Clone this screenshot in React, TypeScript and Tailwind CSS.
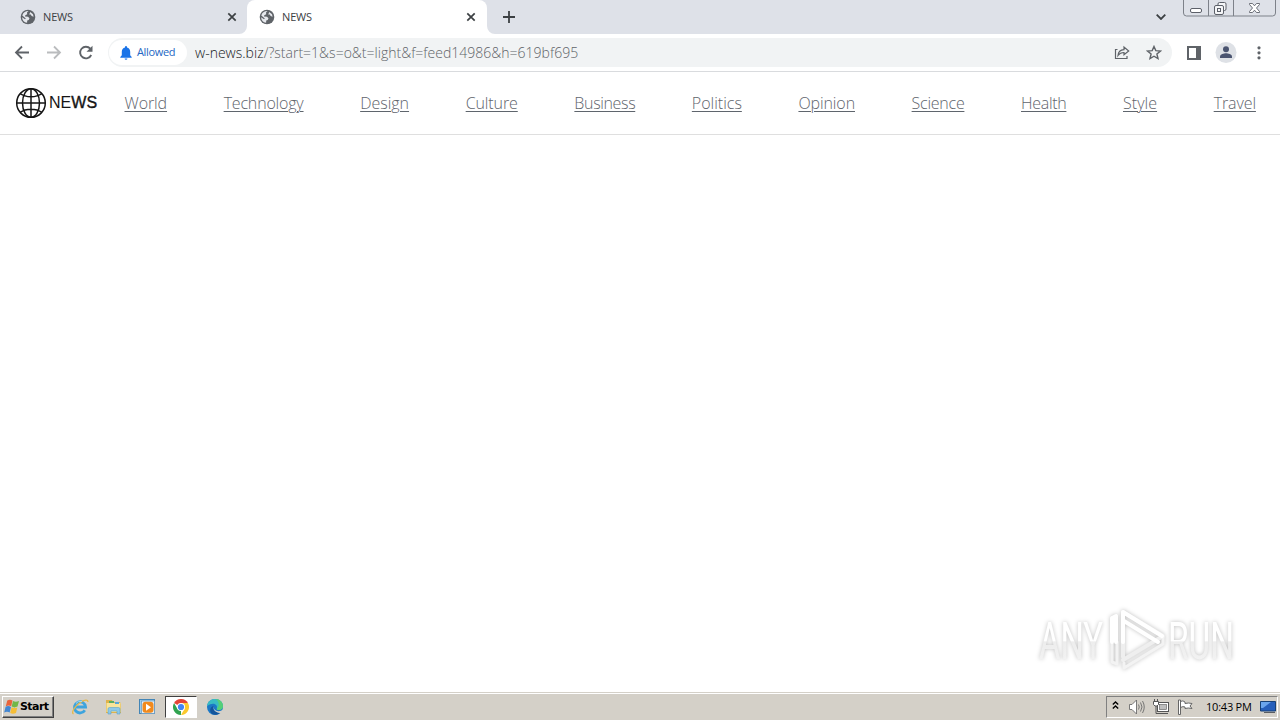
import React from 'react';

const navLinks = [
  { label: 'World', spacing: 'tracking-[-0.1px]' },
  { label: 'Technology', spacing: 'tracking-[-0.18px]' },
  { label: 'Design', spacing: 'tracking-normal' },
  { label: 'Culture', spacing: 'tracking-[-0.1px]' },
  { label: 'Business', spacing: 'tracking-[-0.35px]' },
  { label: 'Politics', spacing: 'tracking-normal' },
  { label: 'Opinion', spacing: 'tracking-[-0.1px]' },
  { label: 'Science', spacing: 'tracking-[-0.25px]' },
  { label: 'Health', spacing: 'tracking-[-0.3px]' },
  { label: 'Style', spacing: 'tracking-[0.05px]' },
  { label: 'Travel', spacing: 'tracking-[-0.1px]' },
];

const Favicon: React.FC = () => (
  <svg className="h-4 w-4 shrink-0" viewBox="0 0 16 16">
    <circle cx="8" cy="8" r="7.3" fill="#5f6368" />
    <path d="M8.5 2.1 L7 3.6 L7.2 5.3 L5.3 6.2 L5 7.6 L8 7.7 L9.5 9.2 L8.7 11 L7.2 11.4 L7.1 13.8 C4 13.4 2.1 11 2.1 8.2 L5 10.2 L5.8 9.4 L2.3 6.4 C3 3.8 5.5 2 8.5 2.1Z M10.3 3 L13 5.2 L13.6 7.7 L11.6 7.1 L10.8 5.6 L9.2 5.6Z" fill="#e6e8ed" />
  </svg>
);

const CloseIcon: React.FC = () => (
  <svg className="h-2.5 w-2.5 shrink-0" viewBox="0 0 10 10" fill="none" stroke="#3c4043" strokeWidth="1.7">
    <path d="M1.300 1.300l7.400 7.400M8.700 1.300L1.300 8.700" />
  </svg>
);

const TabTitle: React.FC = () => (
  <span className="ml-[7px] flex-1 font-['Open_Sans'] text-[11px] leading-4 tracking-[-0.15px] text-[#3c4043]">NEWS</span>
);

const TabStrip: React.FC = () => (
  <div className="flex h-[34px] bg-[#dee1e8]">
    <div className="flex w-[247px] items-center pr-[10px] pl-5">
      <Favicon />
      <TabTitle />
      <CloseIcon />
    </div>
    <div className="relative flex w-60 items-center rounded-t-lg bg-white pr-[11px] pl-3">
      <svg className="absolute bottom-0 -left-2 h-2 w-2" viewBox="0 0 8 8">
        <path d="M8 0v8H0a8 8 0 0 0 8-8z" fill="#fff" />
      </svg>
      <Favicon />
      <TabTitle />
      <CloseIcon />
      <svg className="absolute -right-2 bottom-0 h-2 w-2" viewBox="0 0 8 8">
        <path d="M0 0v8h8a8 8 0 0 1-8-8z" fill="#fff" />
      </svg>
    </div>
    <svg className="mt-[11px] ml-4 h-3 w-3" viewBox="0 0 12 12" fill="none" stroke="#3c4043" strokeWidth="1.8">
      <path d="M6 0v12M0 6h12" />
    </svg>
    <svg className="mt-[14px] ml-auto h-[6px] w-[10px]" viewBox="0 0 10 6" fill="none" stroke="#3c4043" strokeWidth="1.8">
      <path d="M.7.7L5 5 9.3.7" />
    </svg>
    {/* Window buttons */}
    <svg className="mr-1 ml-[17px] h-[18px] w-[93px]" viewBox="0 0 93 18" fill="none" stroke="#7d8189">
      <path d="M.5 0v13a3 3 0 0 0 3 3h86a3 3 0 0 0 3-3V0M25.5 0v16M50.5 0v16" />
      <g stroke="#5c6069">
        <rect x="7.5" y="8.500" width="11" height="4" rx="1.500" fill="#fff" />
        <path d="M35 5V4a1.500 1.500 0 0 1 1.500-1.500h5A1.500 1.500 0 0 1 43 4v5a1.500 1.500 0 0 1-1.500 1.500H41" fill="#f5f6f8" />
        <rect x="31.500" y="5.500" width="9" height="9" rx="1.500" fill="#f5f6f8" />
        <rect x="34.500" y="8.500" width="3" height="3" />
        <path d="M66.500 3.500h3l2 2.300 2-2.300h3v1L73.500 8l3 3.500v1h-3l-2-2.300-2 2.300h-3v-1l3-3.500-3-3.500z" fill="#fff" strokeWidth=".9" />
      </g>
    </svg>
  </div>
);

const Toolbar: React.FC = () => (
  <div className="flex h-[38px] items-center border-b border-[#d9dbde] bg-white pl-[14px]">
    <svg className="h-4 w-4" viewBox="0 0 16 16" fill="none" stroke="#5f6368" strokeWidth="1.8">
      <path d="M15 7.500H2M8 1.500l-6 6 6 6" />
    </svg>
    <svg className="ml-4 h-4 w-4" viewBox="0 0 16 16" fill="none" stroke="#babcbe" strokeWidth="1.8">
      <path d="M1 7.500h13M8 1.500l6 6-6 6" />
    </svg>
    <svg className="ml-4 h-4 w-4" viewBox="0 0 16 16">
      <path d="M13.200 10A5.800 5.800 0 1 1 12.300 3.700" fill="none" stroke="#5f6368" strokeWidth="1.900" />
      <path d="M14.500.7v6H8.500z" fill="#5f6368" />
    </svg>
    <div className="ml-[14px] flex h-[29px] w-[1064px] items-center rounded-full bg-[#f1f3f4]">
      <div className="ml-px flex h-[25px] w-[78px] items-center rounded-full bg-white pl-[11px]">
        <svg className="h-[14px] w-3" viewBox="0 0 12 14" fill="#1a73e8">
          <path d="M5 1a1 1 0 0 1 2 0v.6c2 .5 3.200 2 3.200 4.200v3.500L11.700 11v.7H.3V11l1.500-1.700V5.800c0-2.200 1.200-3.700 3.200-4.200zM4.600 12.400h2.800a1.400 1.400 0 0 1-2.800 0z" />
        </svg>
        <span className="ml-[5px] font-['Open_Sans'] text-[11px] tracking-[-0.35px] text-[#2467c4]">Allowed</span>
      </div>
      <span className="ml-2 flex-1 font-['Open_Sans'] text-[14px] leading-5 font-light tracking-[0.01px] whitespace-nowrap text-[#5f6368]">
        <span className="text-[#202124]">w-news.biz</span>/?start=1&amp;s=o&amp;t=light&amp;f=feed14986&amp;h=619bf695
      </span>
      <svg className="mr-4 h-4 w-4" viewBox="0 0 16 16" fill="none" stroke="#5f6368" strokeWidth="1.200">
        <path d="M3.500 4.500h-2v9h11.500V11M4 10.500c.3-4 2.500-5.700 6-5.800V2L14.700 6 10 9.800V7.500C7.500 7.500 5.500 8.300 4 10.500z" />
      </svg>
      <svg className="mr-[10px] h-4 w-4" viewBox="0 0 16 16" fill="none" stroke="#5f6368" strokeWidth="1.400">
        <path d="M8 1.500l1.800 4.100 4.700.4-3.600 3 1.100 4.500L8 11.200 4 13.500 5.100 9 1.500 6l4.700-.4z" />
      </svg>
    </div>
    <svg className="ml-[15px] h-[14px] w-[14px]" viewBox="0 0 14 14">
      <path d="M0 0h14v14H0zM2 2v10h7V2z" fill="#5f6368" fillRule="evenodd" />
    </svg>
    <svg className="ml-[14px] h-[22px] w-[22px]" viewBox="0 0 22 22">
      <circle cx="11" cy="10.500" r="10.500" fill="#dee1e6" />
      <circle cx="11" cy="7.200" r="3" fill="#4a5470" />
      <path d="M5 16v-1.500c0-2.300 4-3.300 6-3.300s6 1 6 3.300V16z" fill="#4a5470" />
    </svg>
    <svg className="ml-[19.500px] h-[14px] w-1" viewBox="0 0 4 14" fill="#5f6368">
      <circle cx="2" cy="1.800" r="1.600" />
      <circle cx="2" cy="6.800" r="1.600" />
      <circle cx="2" cy="11.800" r="1.600" />
    </svg>
  </div>
);

const SiteHeader: React.FC = () => (
  <header className="flex h-[63px] items-center border-b border-[#dfdfdf] pr-6 pl-[15px]">
    <svg className="h-8 w-8" viewBox="0 0 32 32" fill="none" stroke="#161616" strokeWidth="1.500">
      <circle cx="16" cy="16" r="14.300" />
      <ellipse cx="16" cy="16" rx="8.500" ry="14.300" />
      <path d="M16 1.700v28.600M1.700 16h28.600M5 6.500c6 4.300 16 4.300 22 0M5 25.500c6-4.300 16-4.300 22 0" />
    </svg>
    <span className="ml-[2px] w-[75.500px] font-['Liberation_Sans'] text-[16px] leading-6 tracking-[0.05px] text-[#161616]">
      NE<span className="[-webkit-text-stroke:0.4px_#161616]">WS</span>
    </span>
    <nav className="flex flex-1 justify-between font-['Open_Sans'] text-[16px] leading-6 font-light text-[#5f656d]">
      {navLinks.map((link) => (
        <a key={link.label} href="#" className={`underline decoration-1 underline-offset-2 ${link.spacing}`}>
          {link.label}
        </a>
      ))}
    </nav>
  </header>
);

const Watermark: React.FC = () => (
  <svg
    className="absolute right-[38px] bottom-[12px] h-20 w-[210px] overflow-visible drop-shadow-[0_0_2px_rgba(0,0,0,0.25)]"
    viewBox="0 0 210 80"
  >
    <defs>
      <linearGradient id="fade" x1="0" y1="22" x2="0" y2="60" gradientUnits="userSpaceOnUse">
        <stop offset="0.5" stopColor="#fff" />
        <stop offset="0.52" stopColor="#ededed" />
        <stop offset="1" stopColor="#f2f2f2" />
      </linearGradient>
    </defs>
    <g fill="url(#fade)" fontFamily="Roboto" fontSize="51">
      <text x="7" y="59" textLength="64" lengthAdjust="spacingAndGlyphs">ANY</text>
      <text x="136" y="59" textLength="66" lengthAdjust="spacingAndGlyphs">RUN</text>
    </g>
    <g fill="none" strokeWidth="4" strokeLinejoin="round" strokeLinecap="round">
      <path d="M91 57V12l40 24-40 24" stroke="#efefef" />
      <path d="M80 42v20l5 2V42M92 63v5l39-24v-7" stroke="#f3f3f3" strokeWidth="3" />
      <path d="M80 42V18l4-2v26M91 42V12l39 24M92 21l34 21" stroke="#fff" />
    </g>
  </svg>
);

const Taskbar: React.FC = () => (
  <footer className="flex h-[28px] items-center border-t border-[#d4d0c8] bg-[#d4d0c8] pt-px shadow-[inset_0_1px_0_#fff]">
    <button className="ml-[2px] flex h-[22px] w-[52px] items-center border border-t-white border-r-[#404040] border-b-[#404040] border-l-white bg-[#d4d0c8] pl-px shadow-[inset_-1px_-1px_0_#808080]">
      <svg className="h-4 w-4 shrink-0" viewBox="0 0 16 16">
        <path d="M3.300 1.500c2-1.200 3.500-1 5.200.1L7.200 7.300c-1.600-1.100-3.200-1.200-5.400-.1z" fill="#e9643b" />
        <path d="M9 2c1.800 1.100 3.900 1 6 0l-1.500 5.600c-2 1-4 1.100-5.800 0z" fill="#72b747" />
        <path d="M1.600 7.800c1.800-1 3.500-1 5.400.1L5.700 13.500c-1.500-1-3.500-1.100-5.500-.1z" fill="#4387d2" />
        <path d="M7.600 8.300c1.800 1.100 3.700 1 5.700.1L12 14c-2 1-4 1.100-5.800 0z" fill="#f5bd35" />
      </svg>
      <span className="font-['DejaVu_Sans'] text-[11px] leading-4 font-bold tracking-[-0.55px] text-black">Start</span>
    </button>
    <svg className="ml-[17px] h-[18px] w-[18px]" viewBox="0 0 18 18" fill="none">
      <path d="M13.800 12.300a5.600 5.600 0 1 1 .8-3.300H5" stroke="#3da4de" strokeWidth="2.800" />
      <path d="M2.500 16c-2.500-1.500 1-7.500 6-11s8.800-3.600 8.300-1" stroke="#e6b94a" strokeWidth="1.300" />
      <path d="M5 5.500a5 5 0 0 1 6-2" stroke="#a5dcf5" />
    </svg>
    <svg className="ml-4 h-[18px] w-[18px]" viewBox="0 0 18 18">
      <path d="M1 2h6l1 2h7l1 2v9H1z" fill="#dfb34b" />
      <path d="M1.500 5h14v9h-14z" fill="#f8e49b" />
      <path d="M4 3h5v2H4z" fill="#58ad65" />
      <path d="M10 4h4v2h-4z" fill="#57a6d9" />
      <path d="M3 16v-5q0-1.500 1.500-1.500h9Q15 9.500 15 11v5h-3v-3H6v3z" fill="#8ec9e8" stroke="#5aa2c9" strokeWidth=".6" />
    </svg>
    <svg className="ml-4 h-[18px] w-[18px]" viewBox="0 0 18 18">
      <rect x=".5" y="1.500" width="15" height="14" fill="#9ccbea" stroke="#4385b6" />
      <rect x="2.500" y="3" width="13" height="12.500" fill="#e4f0f9" stroke="#6798bd" strokeWidth=".7" />
      <rect x="3.500" y="3.800" width="11" height="11" rx="3" fill="#f18a1d" />
      <path d="M7 5.800v7l5-3.500z" fill="#fff" />
    </svg>
    <div className="ml-2 flex h-[22px] w-8 items-center justify-center border border-t-[#404040] border-r-white border-b-white border-l-[#404040] bg-white">
      <svg className="h-4 w-4" viewBox="0 0 16 16">
        <path d="M8 8L1.070 4a8 8 0 0 1 13.860 0z" fill="#e44436" />
        <path d="M8 8v8A8 8 0 0 1 1.070 4L4.500 10z" fill="#31a350" />
        <path d="M8 4h6.930A8 8 0 0 1 8 16l3.460-6z" fill="#fbc92d" />
        <circle cx="8" cy="8" r="4" fill="#fff" />
        <circle cx="8" cy="8" r="3.100" fill="#4285f4" />
      </svg>
    </div>
    <svg className="ml-[9px] h-[18px] w-[18px]" viewBox="0 0 18 18">
      <circle cx="9" cy="9" r="8" fill="#1b78c6" />
      <path d="M1 8C2 3 5 1 9 1c5 0 8 3.500 8 7.300 0 2.300-1.800 3.700-4 3.700-1.700 0-2.500-.7-2.200-1.500C12 7 8 3 1 8z" fill="#38bcc3" />
      <path d="M10 1.100c4.300.4 7 3.600 7 7.200 0 2.300-1.800 3.700-4 3.700-1.500 0-2.400-.6-2.200-1.300C14 8 13 4 10 1.100z" fill="#55cf78" />
      <path d="M7.500 8C6 11 9 15 14.300 14.200 12 17 8.500 17.500 6 16 3 13 4 9 7.500 8z" fill="#14559c" />
      <path d="M8 8c-1 3 1.500 5.200 4.500 5.200 2 0 3.500-.9 4.300-1.700L18 15C12 16 6 13 8 8z" fill="#d4d0c8" />
    </svg>
    {/* Tray */}
    <div className="mr-[2px] ml-auto flex h-[22px] w-[172px] items-center border border-t-[#808080] border-r-white border-b-white border-l-[#808080] pl-[5px]">
      <svg className="mb-1 h-[8px] w-[7px]" viewBox="0 0 7 8" fill="none" stroke="#000" strokeWidth="1.400">
        <path d="M.8 3.500l2.700-2.500 2.700 2.500M.8 7.500L3.500 5l2.700 2.500" />
      </svg>
      <svg className="ml-[10px] h-4 w-4" viewBox="0 0 16 16" fill="#fff" stroke="#6c6c6c" strokeWidth=".9">
        <path d="M.5 5.500H3L7.500 1v14L3 10.500H.5z" />
        <path d="M9.500 5.500q1.500 2.500 0 5M11.500 3.500q3 4.500 0 9M13.500 2q3.500 6 0 12" fill="none" />
      </svg>
      <svg className="ml-2 h-4 w-4" viewBox="0 0 16 16" fill="#fff" stroke="#555">
        <rect x="4.500" y="3.500" width="11" height="9" />
        <rect x="6.500" y="5.500" width="7" height="5" fill="#bdbdbd" strokeWidth=".6" />
        <path d="M6 14.500h9M3 7v7.500h3" fill="none" />
        <path d="M.5 2.500h5v3L4 7H2L.5 5.500zM1.500 0v2.500M4.500 0v2.500" />
      </svg>
      <svg className="ml-2 h-4 w-4" viewBox="0 0 16 16" fill="#fff" stroke="#666">
        <path d="M3.500 2.500Q6 1 8 3v1.500q3.500-1 7 0L13 7l2 2.500q-4-1-7 0V8q-2-1-4.500.5z" />
        <path d="M1.500 1h2v14.500h-2z" />
      </svg>
      <span className="ml-[13px] w-[51px] font-['Open_Sans'] text-[11px] leading-4 tracking-[-0.22px] whitespace-nowrap text-black">10:43 PM</span>
      <svg className="ml-[3px] h-3 w-4" viewBox="0 0 16 12">
        <path d="M.5.500h15v9.500H.5z" fill="#265fbb" stroke="#174176" />
        <path d="M1 1h10L3 7H1z" fill="#6aa5ed" />
        <path d="M4 11.500h11" stroke="#595d63" />
      </svg>
    </div>
  </footer>
);

const App: React.FC = () => {
  return (
    <div className="flex h-[720px] w-[1280px] flex-col overflow-hidden bg-white">
      <TabStrip />
      <Toolbar />
      <SiteHeader />
      <main className="relative flex-1">
        <Watermark />
      </main>
      <Taskbar />
    </div>
  );
};

export default App;
